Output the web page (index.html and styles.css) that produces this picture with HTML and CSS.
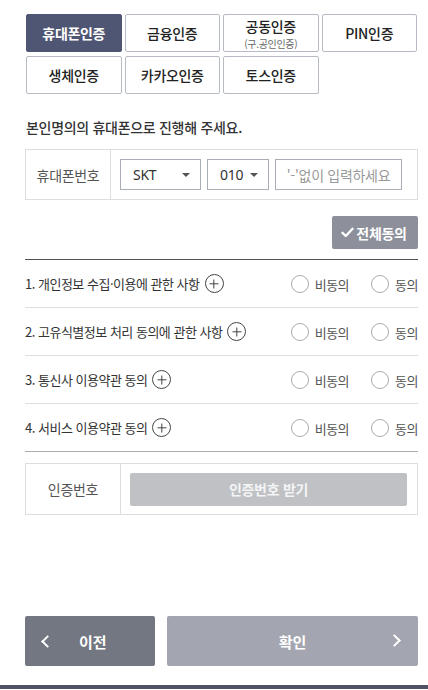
FILE: index.html
```html
<!DOCTYPE html>
<html lang="ko">
<head>
<meta charset="utf-8">
<title>휴대폰인증</title>
<link rel="stylesheet" href="styles.css">
</head>
<body>
<div class="page">
  <div class="tabs">
    <div class="tab active">휴대폰인증</div>
    <div class="tab">금융인증</div>
    <div class="tab two"><span>공동인증</span><small>(구.공인인증)</small></div>
    <div class="tab">PIN인증</div>
    <div class="tab">생체인증</div>
    <div class="tab">카카오인증</div>
    <div class="tab">토스인증</div>
  </div>

  <p class="lead">본인명의의 휴대폰으로 진행해 주세요.</p>

  <div class="box phone">
    <div class="label">휴대폰번호</div>
    <div class="fields">
      <div class="select w1">SKT<span class="caret"></span></div>
      <div class="select w2">010<span class="caret"></span></div>
      <div class="input">'-'없이 입력하세요</div>
    </div>
  </div>

  <div class="allrow">
    <div class="all-btn">
      <svg width="13" height="11" viewBox="0 0 13 11"><path d="M1.5 5.8 L4.8 9 L11.5 1.8" fill="none" stroke="#fff" stroke-width="2.4" stroke-linecap="round" stroke-linejoin="round"/></svg>
      <span>전체동의</span>
    </div>
  </div>

  <div class="agree">
    <div class="row">
      <div class="title">1. 개인정보 수집·이용에 관한 사항<span class="plus"></span></div>
      <div class="radios"><span class="radio"></span><span class="rl">비동의</span><span class="radio r2"></span><span class="rl">동의</span></div>
    </div>
    <div class="row">
      <div class="title">2. 고유식별정보 처리 동의에 관한 사항<span class="plus"></span></div>
      <div class="radios"><span class="radio"></span><span class="rl">비동의</span><span class="radio r2"></span><span class="rl">동의</span></div>
    </div>
    <div class="row">
      <div class="title">3. 통신사 이용약관 동의<span class="plus"></span></div>
      <div class="radios"><span class="radio"></span><span class="rl">비동의</span><span class="radio r2"></span><span class="rl">동의</span></div>
    </div>
    <div class="row last">
      <div class="title">4. 서비스 이용약관 동의<span class="plus"></span></div>
      <div class="radios"><span class="radio"></span><span class="rl">비동의</span><span class="radio r2"></span><span class="rl">동의</span></div>
    </div>
  </div>

  <div class="box auth">
    <div class="label wide">인증번호</div>
    <div class="fields">
      <div class="auth-btn">인증번호 받기</div>
    </div>
  </div>

  <div class="nav">
    <div class="btn prev"><span class="chev left"></span><span>이전</span></div>
    <div class="btn ok"><span>확인</span><span class="chev right"></span></div>
  </div>
</div>
<div class="footbar"></div>
</body>
</html>
```

FILE: styles.css
```css
* { box-sizing: border-box; }
html, body { margin: 0; padding: 0; background: #fff; }
body {
  font-family: "Noto Sans CJK KR", "Noto Sans", sans-serif;
  color: #333;
  width: 428px;
  height: 690px;
  overflow: hidden;
}
.page {
  padding: 14px 10px 0 25px;
}
.tabs {
  display: grid;
  grid-template-columns: repeat(4, 1fr);
  gap: 4px 3px;
  padding-left: 1px;
  padding-right: 1px;
}
.tab {
  height: 38px;
  border: 1px solid #b7bbc4;
  border-radius: 2px;
  display: flex;
  align-items: center;
  justify-content: center;
  font-size: 14px;
  font-weight: 500;
  color: #222;
  letter-spacing: -0.3px;
}
.tab.active {
  background: #4f5673;
  border-color: #4f5673;
  color: #fff;
  font-weight: 700;
}
.tab.two {
  flex-direction: column;
  line-height: normal;
  padding-top: 1px;
}
.tab.two span { display: block; line-height: normal; }
.tab.two small {
  display: block;
  font-size: 10px;
  font-weight: 400;
  color: #666;
  line-height: normal;
}
.lead {
  margin: 23px 0 0 1px;
  font-size: 14px;
  line-height: 20px;
  font-weight: 500;
  color: #333;
  letter-spacing: -0.3px;
}
.box {
  display: flex;
  border: 1px solid #dcdee2;
}
.phone {
  margin-top: 12px;
  height: 51px;
}
.label {
  width: 85px;
  flex: none;
  border-right: 1px solid #dcdee2;
  display: flex;
  align-items: center;
  justify-content: center;
  font-size: 14px;
  color: #555;
  letter-spacing: -0.3px;
}
.label.wide { width: 95px; }
.fields {
  flex: 1;
  display: flex;
  align-items: center;
  gap: 6px;
  padding: 0 15px 0 9px;
}
.select {
  height: 31px;
  border: 1px solid #a9aeb6;
  display: flex;
  align-items: center;
  justify-content: space-between;
  padding: 0 10px 0 12px;
  font-family: "Noto Sans", sans-serif;
  font-size: 14px;
  color: #333;
  letter-spacing: -0.3px;
}
.w1 { width: 81px; }
.w2 { width: 62px; padding-left: 12px; padding-right: 10px; }
.caret {
  width: 0; height: 0;
  border-left: 4px solid transparent;
  border-right: 4px solid transparent;
  border-top: 4px solid #555;
}
.input {
  flex: 1;
  height: 31px;
  border: 1px solid #a9aeb6;
  display: flex;
  align-items: center;
  justify-content: center;
  font-size: 14px;
  color: #999;
  letter-spacing: -0.3px;
  white-space: nowrap;
}
.allrow {
  display: flex;
  justify-content: flex-end;
  margin-top: 16px;
}
.all-btn {
  width: 86px;
  height: 33px;
  background: #8d8f9b;
  border-radius: 2px;
  display: flex;
  align-items: center;
  justify-content: center;
  gap: 2px;
  color: #fff;
  font-size: 14px;
  font-weight: 700;
  letter-spacing: -0.3px;
  padding-right: 2px;
}
.agree {
  margin-top: 10px;
  border-top: 1px solid #555;
}
.row {
  height: 48px;
  border-bottom: 1px solid #dcdee2;
  display: flex;
  align-items: center;
  justify-content: space-between;
}
.row.last { border-bottom-color: #a9abb0; }
.title {
  display: flex;
  align-items: center;
  font-size: 13px;
  color: #333;
  letter-spacing: -0.5px;
  white-space: nowrap;
}
.plus {
  width: 19px;
  height: 19px;
  border: 1px solid #444;
  border-radius: 50%;
  margin-left: 5px;
  position: relative;
  flex: none;
}
.plus::before, .plus::after {
  content: "";
  position: absolute;
  background: #444;
  left: 50%; top: 50%;
}
.plus::before { width: 9px; height: 1.4px; transform: translate(-50%, -50%); }
.plus::after { width: 1.4px; height: 9px; transform: translate(-50%, -50%); }
.radios {
  display: flex;
  align-items: center;
  font-size: 13px;
  color: #555;
  letter-spacing: -0.5px;
}
.radio {
  width: 18px;
  height: 18px;
  border: 1px solid #a9abb0;
  border-radius: 50%;
  margin-right: 6px;
}
.radio.r2 { margin-left: 22px; }
.rl { line-height: 18px; padding-top: 2px; }
.auth {
  margin-top: 11px;
  height: 52px;
}
.auth .fields { padding: 0 10px 0 9px; }
.auth-btn {
  flex: 1;
  height: 33px;
  background: #bfc1c5;
  border-radius: 2px;
  display: flex;
  align-items: center;
  justify-content: center;
  color: #f4f4f5;
  font-size: 14px;
  font-weight: 700;
  letter-spacing: -0.3px;
}
.nav {
  margin-top: 101px;
  display: flex;
  gap: 12px;
}
.btn {
  height: 50px;
  border-radius: 2px;
  display: flex;
  align-items: center;
  color: #fff;
  font-size: 15px;
  font-weight: 700;
}
.prev {
  width: 130px;
  background: #737781;
  padding-left: 18px;
  gap: 27px;
}
.ok {
  flex: 1;
  background: #a3a5b0;
  justify-content: center;
  position: relative;
}
.chev {
  width: 9px;
  height: 9px;
  border-top: 2.4px solid #fff;
  border-left: 2.4px solid #fff;
}
.chev.left { transform: rotate(-45deg); }
.chev.right {
  position: absolute;
  right: 19px;
  top: 20px;
  transform: rotate(135deg);
}
.footbar {
  margin-top: 19px;
  height: 4px;
  background: #4d5264;
}
```
